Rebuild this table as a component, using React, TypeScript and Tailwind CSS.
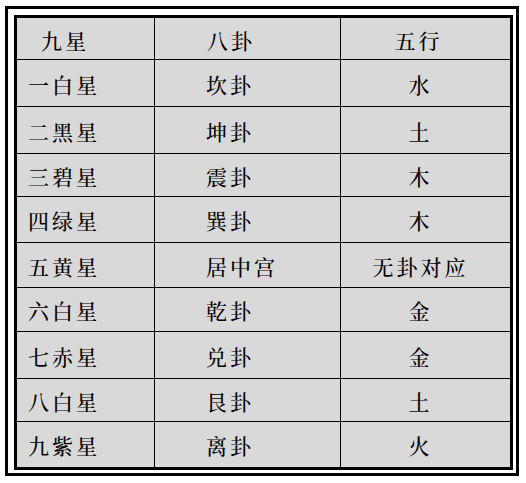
import React from 'react';

type Row = { star: string; gua: string; element: string };

const rows: Row[] = [
  { star: '一白星', gua: '坎卦', element: '水' },
  { star: '二黑星', gua: '坤卦', element: '土' },
  { star: '三碧星', gua: '震卦', element: '木' },
  { star: '四绿星', gua: '巽卦', element: '木' },
  { star: '五黄星', gua: '居中宫', element: '无卦对应' },
  { star: '六白星', gua: '乾卦', element: '金' },
  { star: '七赤星', gua: '兑卦', element: '金' },
  { star: '八白星', gua: '艮卦', element: '土' },
  { star: '九紫星', gua: '离卦', element: '火' },
];

const font = { fontFamily: '"Noto Serif CJK SC", "Noto Sans CJK SC", serif' };

const cell = 'bg-[#d9d9d9] flex items-center text-[21px] tracking-[3px] font-medium text-black leading-none';

const App: React.FC = () => {
  return (
    <div className="w-[526px] h-[483px] bg-white pt-[6px] pl-[5px]" style={font}>
      <div className="w-[514px] h-[470px] border-[3px] border-black pt-[6px] pl-[6px]">
        <div className="w-[499px] border-[3px] border-black bg-black grid grid-cols-[137px_185px_169px] grid-rows-[41px_46px_46px_42px_45px_44px_43px_46px_42px_45px] gap-px">
          {/* header */}
          <div className={`${cell} pl-[24px] pt-[4px]`}>九星</div>
          <div className={`${cell} pl-[52px] pt-[4px]`}>八卦</div>
          <div className={`${cell} justify-center pr-[14px] pt-[4px]`}>五行</div>

          {rows.map((r) => (
            <React.Fragment key={r.star}>
              <div className={`${cell} pl-[11px] pt-[2px]`}>{r.star}</div>
              <div className={`${cell} pl-[51px] pt-[2px]`}>{r.gua}</div>
              <div className={`${cell} justify-center pr-[10px] pt-[2px]`}>{r.element}</div>
            </React.Fragment>
          ))}
        </div>
      </div>
    </div>
  );
};

export default App;
